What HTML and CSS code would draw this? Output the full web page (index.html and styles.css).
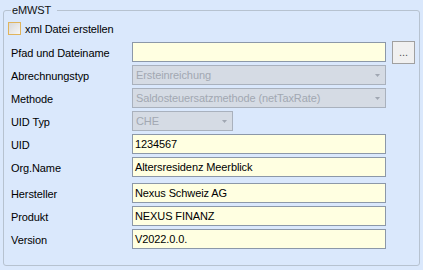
FILE: index.html
```html
<!DOCTYPE html>
<html lang="de">
<head>
  <meta charset="UTF-8">
  <title>eMWST</title>
  <link rel="stylesheet" href="styles.css">
</head>
<body>
  <fieldset class="group">
    <legend>eMWST</legend>
    <label class="check"><span class="box"></span>xml Datei erstellen</label>
    <div class="form">
      <span class="lbl">Pfad und Dateiname</span>
      <div class="field"></div>
      <button class="browse" type="button">...</button>

      <span class="lbl">Abrechnungstyp</span>
      <div class="combo"><span>Ersteinreichung</span><svg width="5" height="3" viewBox="0 0 5 3"><path d="M0 0h5L2.5 3z" fill="#a0a7b2"/></svg></div>
      <span></span>

      <span class="lbl">Methode</span>
      <div class="combo"><span>Saldosteuersatzmethode (netTaxRate)</span><svg width="5" height="3" viewBox="0 0 5 3"><path d="M0 0h5L2.5 3z" fill="#a0a7b2"/></svg></div>
      <span></span>

      <span class="lbl">UID Typ</span>
      <div class="combo short"><span>CHE</span><svg width="5" height="3" viewBox="0 0 5 3"><path d="M0 0h5L2.5 3z" fill="#a0a7b2"/></svg></div>
      <span></span>

      <span class="lbl">UID</span>
      <div class="field">1234567</div>
      <span></span>

      <span class="lbl">Org.Name</span>
      <div class="field">Altersresidenz Meerblick</div>
      <span></span>

      <div class="spacer"></div>

      <span class="lbl">Hersteller</span>
      <div class="field">Nexus Schweiz AG</div>
      <span></span>

      <span class="lbl">Produkt</span>
      <div class="field">NEXUS FINANZ</div>
      <span></span>

      <span class="lbl">Version</span>
      <div class="field">V2022.0.0.</div>
      <span></span>
    </div>
  </fieldset>
</body>
</html>
```

FILE: styles.css
```css
body {
  margin: 0;
  background-color: #dae8fc;
  font-family: "Liberation Sans", Arial, sans-serif;
  font-size: 11px;
  letter-spacing: -0.1px;
  color: #000;
}

.group {
  margin: 3px 3px 0;
  padding: 3px 0 16px 7px;
  border: 1px solid #b6c2d0;
  border-radius: 3px;
  min-width: 0;
}

.group legend {
  padding: 0 6px 0 1px;
  line-height: 15px;
  color: #111;
}

.check {
  display: flex;
  align-items: center;
  height: 15px;
  margin-left: -3px;
}

.check .box {
  width: 11px;
  height: 11px;
  margin-right: 4px;
  border: 1px solid #e0b45c;
  background: linear-gradient(135deg, #d8d8d8, #f6f6f6);
}

.form {
  display: grid;
  grid-template-columns: 121px 254px 29px;
  grid-template-rows: repeat(6, 20px) 0 repeat(3, 20px);
  row-gap: 3px;
  margin-top: 6px;
}

.spacer {
  grid-column: 1 / -1;
}

.lbl {
  display: flex;
  align-items: center;
  padding-top: 2px;
  white-space: nowrap;
}

.field {
  display: flex;
  align-items: center;
  padding: 0 2px 1px 2px;
  border: 1px solid #8c98a8;
  background-color: #ffffe1;
  white-space: nowrap;
  overflow: hidden;
}

.combo {
  display: flex;
  align-items: center;
  justify-content: space-between;
  padding: 0 5px 1px 3px;
  border: 1px solid #a9b1bd;
  background-color: #d5dbe4;
  color: #a2a8b2;
  white-space: nowrap;
}

.combo svg {
  margin-top: 1px;
  flex: none;
}

.combo.short {
  width: 101px;
  box-sizing: border-box;
}

.browse {
  width: 23px;
  height: 23px;
  margin: -1px 0 0 6px;
  padding: 0 0 2px;
  border: 1px solid #a0a0a0;
  background-color: #f0f0f0;
  font-family: "Liberation Sans", Arial, sans-serif;
  font-size: 11px;
  color: #555;
}
```
